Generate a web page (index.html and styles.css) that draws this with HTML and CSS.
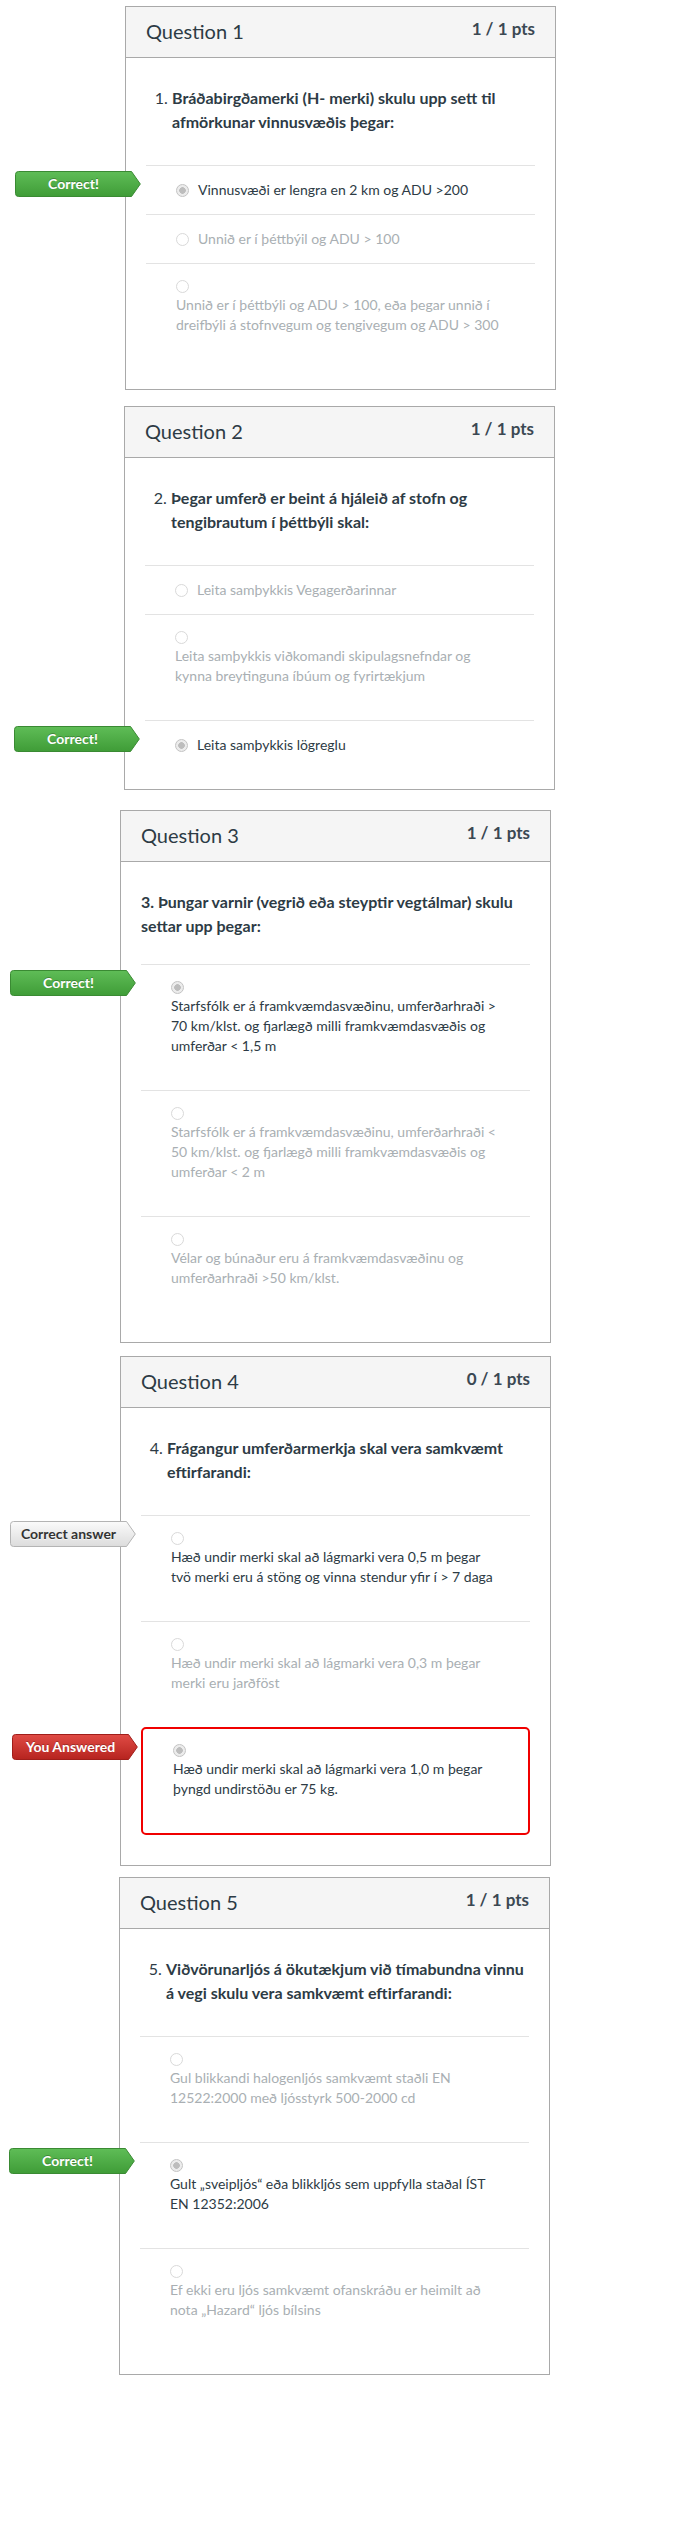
FILE: index.html
```html
<!DOCTYPE html>
<html lang="is">
<head>
<meta charset="utf-8">
<title>Quiz results</title>
<link rel="stylesheet" href="styles.css">
</head>
<body>
<main class="quiz">

  <section class="card card-1">
    <header class="card-header">
      <span class="q-name">Question 1</span>
      <span class="q-pts">1 / 1 pts</span>
    </header>
    <div class="card-body">
      <ol class="q-list" start="1"><li><strong>Bráðabirgðamerki (H- merki) skulu upp sett til<br>afmörkunar vinnusvæðis þegar:</strong></li></ol>
      <div class="answer inline dark">
        <div class="badge badge-green"><svg viewBox="0 0 126 26" width="126" height="26"><defs><linearGradient id="gg1" x1="0" y1="0" x2="0" y2="1"><stop offset="0" stop-color="#5fbd57"/><stop offset="1" stop-color="#3f9c37"/></linearGradient></defs><path d="M3.5 0.5H116.5L125.3 13L116.5 25.5H3.5Q0.5 25.5 0.5 22.5V3.5Q0.5 0.5 3.5 0.5Z" fill="url(#gg1)" stroke="#3a8a33"/></svg><span class="badge-text">Correct!</span></div>
        <span class="radio checked"></span><span class="answer-label">Vinnusvæði er lengra en 2 km og ADU &gt;200</span>
      </div>
      <div class="answer inline grey">
        <span class="radio"></span><span class="answer-label">Unnið er í þéttbýil og ADU &gt; 100</span>
      </div>
      <div class="answer stacked grey">
        <div class="radio-line"><span class="radio"></span></div>
        <div class="answer-text">Unnið er í þéttbýli og ADU &gt; 100, eða þegar unnið í<br>dreifbýli á stofnvegum og tengivegum og ADU &gt; 300</div>
      </div>
    </div>
  </section>

  <section class="card card-2">
    <header class="card-header">
      <span class="q-name">Question 2</span>
      <span class="q-pts">1 / 1 pts</span>
    </header>
    <div class="card-body">
      <ol class="q-list" start="2"><li><strong>Þegar umferð er beint á hjáleið af stofn og<br>tengibrautum í þéttbýli skal:</strong></li></ol>
      <div class="answer inline grey">
        <span class="radio"></span><span class="answer-label">Leita samþykkis Vegagerðarinnar</span>
      </div>
      <div class="answer stacked grey">
        <div class="radio-line"><span class="radio"></span></div>
        <div class="answer-text">Leita samþykkis viðkomandi skipulagsnefndar og<br>kynna breytinguna íbúum og fyrirtækjum</div>
      </div>
      <div class="answer inline dark">
        <div class="badge badge-green"><svg viewBox="0 0 126 26" width="126" height="26"><defs><linearGradient id="gg2" x1="0" y1="0" x2="0" y2="1"><stop offset="0" stop-color="#5fbd57"/><stop offset="1" stop-color="#3f9c37"/></linearGradient></defs><path d="M3.5 0.5H116.5L125.3 13L116.5 25.5H3.5Q0.5 25.5 0.5 22.5V3.5Q0.5 0.5 3.5 0.5Z" fill="url(#gg2)" stroke="#3a8a33"/></svg><span class="badge-text">Correct!</span></div>
        <span class="radio checked"></span><span class="answer-label">Leita samþykkis lögreglu</span>
      </div>
    </div>
  </section>

  <section class="card card-3">
    <header class="card-header">
      <span class="q-name">Question 3</span>
      <span class="q-pts">1 / 1 pts</span>
    </header>
    <div class="card-body">
      <p class="q-para">3. Þungar varnir (vegrið eða steyptir vegtálmar) skulu<br>settar upp þegar:</p>
      <div class="answer stacked dark">
        <div class="badge badge-green"><svg viewBox="0 0 126 26" width="126" height="26"><defs><linearGradient id="gg3" x1="0" y1="0" x2="0" y2="1"><stop offset="0" stop-color="#5fbd57"/><stop offset="1" stop-color="#3f9c37"/></linearGradient></defs><path d="M3.5 0.5H116.5L125.3 13L116.5 25.5H3.5Q0.5 25.5 0.5 22.5V3.5Q0.5 0.5 3.5 0.5Z" fill="url(#gg3)" stroke="#3a8a33"/></svg><span class="badge-text">Correct!</span></div>
        <div class="radio-line"><span class="radio checked"></span></div>
        <div class="answer-text">Starfsfólk er á framkvæmdasvæðinu, umferðarhraði &gt;<br>70 km/klst. og fjarlægð milli framkvæmdasvæðis og<br>umferðar &lt; 1,5 m</div>
      </div>
      <div class="answer stacked grey">
        <div class="radio-line"><span class="radio"></span></div>
        <div class="answer-text">Starfsfólk er á framkvæmdasvæðinu, umferðarhraði &lt;<br>50 km/klst. og fjarlægð milli framkvæmdasvæðis og<br>umferðar &lt; 2 m</div>
      </div>
      <div class="answer stacked grey">
        <div class="radio-line"><span class="radio"></span></div>
        <div class="answer-text">Vélar og búnaður eru á framkvæmdasvæðinu og<br>umferðarhraði &gt;50 km/klst.</div>
      </div>
    </div>
  </section>

  <section class="card card-4">
    <header class="card-header">
      <span class="q-name">Question 4</span>
      <span class="q-pts">0 / 1 pts</span>
    </header>
    <div class="card-body">
      <ol class="q-list" start="4"><li><strong>Frágangur umferðarmerkja skal vera samkvæmt<br>eftirfarandi:</strong></li></ol>
      <div class="answer stacked dark">
        <div class="badge badge-grey"><svg viewBox="0 0 126 26" width="126" height="26"><defs><linearGradient id="gs4" x1="0" y1="0" x2="0" y2="1"><stop offset="0" stop-color="#fbfbfb"/><stop offset="1" stop-color="#dcdcdc"/></linearGradient></defs><path d="M3.5 0.5H116.5L125.3 13L116.5 25.5H3.5Q0.5 25.5 0.5 22.5V3.5Q0.5 0.5 3.5 0.5Z" fill="url(#gs4)" stroke="#b4b4b4"/></svg><span class="badge-text">Correct answer</span></div>
        <div class="radio-line"><span class="radio"></span></div>
        <div class="answer-text">Hæð undir merki skal að lágmarki vera 0,5 m þegar<br>tvö merki eru á stöng og vinna stendur yfir í &gt; 7 daga</div>
      </div>
      <div class="answer stacked grey">
        <div class="radio-line"><span class="radio"></span></div>
        <div class="answer-text">Hæð undir merki skal að lágmarki vera 0,3 m þegar<br>merki eru jarðföst</div>
      </div>
      <div class="answer stacked dark wrong">
        <div class="badge badge-red"><svg viewBox="0 0 126 26" width="126" height="26"><defs><linearGradient id="gr4" x1="0" y1="0" x2="0" y2="1"><stop offset="0" stop-color="#e04b45"/><stop offset="1" stop-color="#b6241f"/></linearGradient></defs><path d="M3.5 0.5H116.5L125.3 13L116.5 25.5H3.5Q0.5 25.5 0.5 22.5V3.5Q0.5 0.5 3.5 0.5Z" fill="url(#gr4)" stroke="#a01e1a"/></svg><span class="badge-text">You Answered</span></div>
        <div class="radio-line"><span class="radio checked"></span></div>
        <div class="answer-text">Hæð undir merki skal að lágmarki vera 1,0 m þegar<br>þyngd undirstöðu er 75 kg.</div>
      </div>
    </div>
  </section>

  <section class="card card-5">
    <header class="card-header">
      <span class="q-name">Question 5</span>
      <span class="q-pts">1 / 1 pts</span>
    </header>
    <div class="card-body">
      <ol class="q-list" start="5"><li><strong>Viðvörunarljós á ökutækjum við tímabundna vinnu<br>á vegi skulu vera samkvæmt eftirfarandi:</strong></li></ol>
      <div class="answer stacked grey">
        <div class="radio-line"><span class="radio"></span></div>
        <div class="answer-text">Gul blikkandi halogenljós samkvæmt staðli EN<br>12522:2000 með ljósstyrk 500-2000 cd</div>
      </div>
      <div class="answer stacked dark">
        <div class="badge badge-green"><svg viewBox="0 0 126 26" width="126" height="26"><defs><linearGradient id="gg5" x1="0" y1="0" x2="0" y2="1"><stop offset="0" stop-color="#5fbd57"/><stop offset="1" stop-color="#3f9c37"/></linearGradient></defs><path d="M3.5 0.5H116.5L125.3 13L116.5 25.5H3.5Q0.5 25.5 0.5 22.5V3.5Q0.5 0.5 3.5 0.5Z" fill="url(#gg5)" stroke="#3a8a33"/></svg><span class="badge-text">Correct!</span></div>
        <div class="radio-line"><span class="radio checked"></span></div>
        <div class="answer-text">Gult „sveipljós“ eða blikkljós sem uppfylla staðal ÍST<br>EN 12352:2006</div>
      </div>
      <div class="answer stacked grey">
        <div class="radio-line"><span class="radio"></span></div>
        <div class="answer-text">Ef ekki eru ljós samkvæmt ofanskráðu er heimilt að<br>nota „Hazard“ ljós bílsins</div>
      </div>
    </div>
  </section>

</main>
</body>
</html>
```

FILE: styles.css
```css
html, body {
  margin: 0;
  padding: 0;
  background: #ffffff;
}

body {
  font-family: Lato, "Open Sans", "Liberation Sans", sans-serif;
  color: #2d3b45;
}

.quiz {
  display: flex;
  flex-direction: column;
  align-items: flex-start;
  padding-bottom: 154px;
}

.card {
  box-sizing: border-box;
  width: 431px;
  border: 1px solid #a9a9a9;
  background: #ffffff;
}

.card-1 { margin: 6px 0 0 125px; }
.card-2 { margin: 16px 0 0 124px; }
.card-3 { margin: 20px 0 0 120px; }
.card-4 { margin: 13px 0 0 120px; }
.card-5 { margin: 11px 0 0 119px; }

.card-header {
  height: 50px;
  padding: 0 20px;
  background: #f5f5f5;
  border-bottom: 1px solid #a9a9a9;
  display: flex;
  justify-content: space-between;
  align-items: flex-start;
}

.q-name {
  margin-top: 12px;
  font-size: 20px;
  line-height: 24px;
  color: #2d3b45;
}

.q-pts {
  margin-top: 12px;
  font-size: 17px;
  line-height: 20px;
  font-weight: 700;
  color: #3b4853;
}

.card-body {
  padding: 28px 20px 20px;
}

.q-list {
  margin: 0 0 31px;
  padding-left: 26px;
  font-size: 16px;
  line-height: 24px;
  color: #2d3b45;
}

.q-list strong {
  font-weight: 700;
}

.q-para {
  margin: 0 0 26px;
  font-size: 16px;
  line-height: 24px;
  font-weight: 700;
  color: #2d3b45;
}

.answer {
  position: relative;
  border-top: 1px solid #e3e3e3;
  padding: 14px 0 14px 30px;
  font-size: 14px;
  line-height: 20px;
}

.answer.inline {
  display: flex;
  align-items: center;
}

.answer.inline .radio {
  margin-right: 9px;
}

.answer.dark { color: #2d3b45; }
.answer.grey { color: #a9afb3; }

.answer.wrong {
  border: 2px solid #f00000;
  border-radius: 5px;
  padding: 13px 0 14px 30px;
  margin-bottom: 10px;
}

.radio-line {
  height: 17px;
  display: flex;
  align-items: center;
}

.answer-text {
  margin-bottom: 20px;
}

.radio {
  flex: none;
  display: inline-block;
  box-sizing: border-box;
  width: 13px;
  height: 13px;
  border-radius: 50%;
  border: 1px solid #d9d9d9;
  background: #ffffff;
}

.radio.checked {
  border-color: #c3c3c3;
  background: radial-gradient(circle at center, #bdbdbd 0, #bdbdbd 3px, #ececec 3.6px);
}

.badge {
  position: absolute;
  left: -131px;
  top: 5px;
  width: 126px;
  height: 26px;
  display: grid;
}

.badge svg,
.badge .badge-text {
  grid-area: 1 / 1;
}

.badge svg {
  display: block;
}

.badge-text {
  width: 117px;
  text-align: center;
  font-size: 14px;
  line-height: 25px;
  font-weight: 700;
}

.badge-green .badge-text,
.badge-red .badge-text {
  color: #ffffff;
  text-shadow: 0 -1px 0 rgba(0, 0, 0, 0.25);
}

.badge-grey .badge-text {
  color: #333333;
  text-shadow: 0 1px 0 rgba(255, 255, 255, 0.6);
}
```
